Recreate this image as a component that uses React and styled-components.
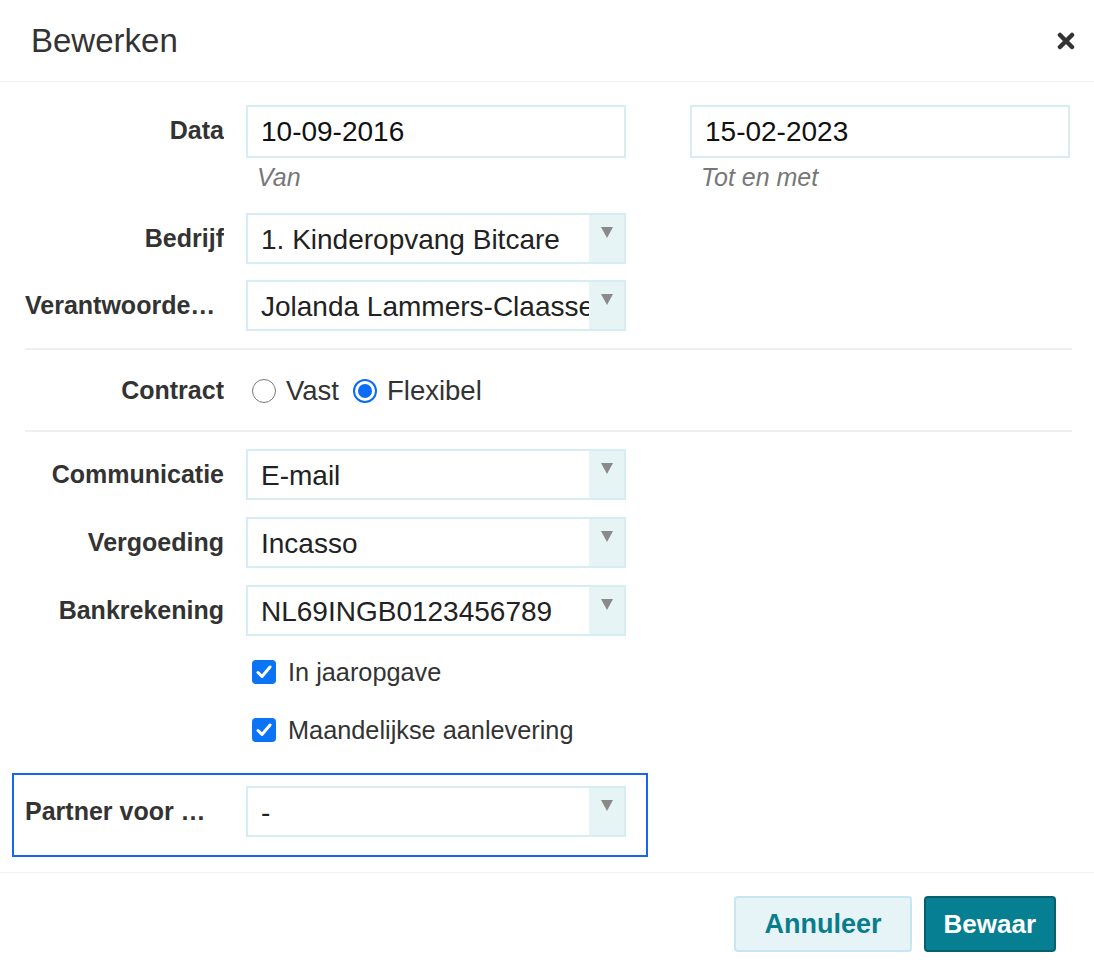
import React, { useState } from 'react'
import styled, { createGlobalStyle } from 'styled-components'

const GlobalStyle = createGlobalStyle`
  body {
    margin: 0;
    background: #fff;
    font-family: "Liberation Sans", Arial, sans-serif;
    color: #333;
  }
`

const Modal = styled.div`
  width: 1094px;
  height: 974px;
  display: flex;
  flex-direction: column;
  background: #fff;
`

const Header = styled.div`
  height: 82px;
  display: flex;
  align-items: center;
  justify-content: space-between;
  padding: 0 18px 0 31px;
  border-bottom: 1px solid #eef4f7;
  box-sizing: border-box;
`

const Title = styled.h1`
  margin: 0;
  font-size: 33px;
  font-weight: normal;
  color: #333;
`

const CloseButton = styled.button`
  border: 0;
  background: none;
  padding: 0;
  width: 20px;
  height: 20px;
  display: flex;
  align-items: center;
  justify-content: center;
  cursor: pointer;
`

const Body = styled.div`
  padding: 23px 22px 0 25px;
  display: flex;
  flex-direction: column;
`

const Row = styled.div`
  display: flex;
  align-items: ${p => (p.$top ? 'flex-start' : 'center')};
  margin-bottom: ${p => p.$mb ?? 16}px;
`

const Label = styled.label`
  width: 199px;
  flex: none;
  margin-right: 22px;
  text-align: ${p => (p.$left ? 'left' : 'right')};
  font-size: 25px;
  font-weight: bold;
  color: #333;
  white-space: nowrap;
  overflow: hidden;
  text-overflow: ellipsis;
  ${p => p.$top && 'padding-top: 11px;'}
`

const FieldGroup = styled.div`
  width: 380px;
  display: flex;
  flex-direction: column;
  & + & {
    margin-left: 64px;
  }
`

const TextInput = styled.input`
  width: 380px;
  height: 53px;
  box-sizing: border-box;
  border: 2px solid #d7ecf3;
  padding: 0 13px;
  font-family: inherit;
  font-size: 28px;
  color: #111;
  outline: none;
`

const Hint = styled.span`
  font-size: 25px;
  font-style: italic;
  color: #777;
  margin: 5px 0 0 11px;
  line-height: 28px;
`

const SelectBox = styled.div`
  width: 380px;
  height: 51px;
  box-sizing: border-box;
  border: 2px solid #d7ecf3;
  display: flex;
  background: #fff;
`

const SelectValue = styled.div`
  flex: 1;
  min-width: 0;
  padding: 3px 0 0 13px;
  display: flex;
  align-items: center;
  font-size: 28px;
  color: #222;
  white-space: nowrap;
  overflow: hidden;
`

const Arrow = styled.div`
  width: 35px;
  flex: none;
  background: #e7f4f6;
  display: flex;
  justify-content: center;
  padding-top: 12px;
  box-sizing: border-box;
`

const Divider = styled.hr`
  border: 0;
  border-top: 2px solid #f0f0f0;
  margin: 0;
`

const ContractRow = styled.div`
  height: 80px;
  display: flex;
  align-items: center;
`

const Choices = styled.div`
  display: flex;
  align-items: center;
  gap: 10px;
  font-size: 27.5px;
  color: #333;
  padding-top: 2px;
`

const RadioLabel = styled.label`
  display: flex;
  align-items: center;
  gap: 10px;
  margin-left: 6px;
  & + & {
    margin-left: 4px;
  }
`

const RadioCircle = styled.span`
  width: 24px;
  height: 24px;
  box-sizing: border-box;
  border-radius: 50%;
  border: ${p => (p.$on ? '2px solid #0a6cf5' : '1.5px solid #777')};
  display: flex;
  align-items: center;
  justify-content: center;
  &::after {
    content: '';
    width: 14px;
    height: 14px;
    border-radius: 50%;
    background: ${p => (p.$on ? '#0a6cf5' : 'transparent')};
  }
`

const CheckRow = styled.label`
  display: flex;
  align-items: center;
  gap: 12px;
  margin-left: 227px;
  height: 30px;
  font-size: 25.3px;
  color: #333;
  margin-bottom: ${p => p.$mb}px;
`

const CheckBox = styled.span`
  width: 24px;
  height: 24px;
  border-radius: 4px;
  background: #0b74f5;
  display: flex;
  align-items: center;
  justify-content: center;
`

const FocusBox = styled.div`
  margin: 0 424px 0 -13px;
  border: 2px solid #1766f2;
  padding: 11px 0 18px 11px;
`

const Footer = styled.div`
  margin-top: 15px;
  border-top: 1px solid #eef4f7;
  display: flex;
  justify-content: flex-end;
  gap: 12px;
  padding: 23px 38px 0 0;
`

const Button = styled.button`
  height: 56px;
  box-sizing: border-box;
  border-radius: 4px;
  font-family: inherit;
  font-size: ${p => (p.$primary ? 26 : 27)}px;
  font-weight: bold;
  cursor: pointer;
  padding: 0 ${p => p.$px}px;
  border: 2px solid ${p => (p.$primary ? '#055f6d' : '#c6e7ef')};
  background: ${p => (p.$primary ? '#077f92' : '#e7f4f7')};
  color: ${p => (p.$primary ? '#fff' : '#0a7d8d')};
`

const Triangle = () => (
  <svg width="12" height="11" viewBox="0 0 12 11">
    <polygon points="0,0 12,0 6,11" fill="#8a8a8a" />
  </svg>
)

const Select = ({ value }) => (
  <SelectBox>
    <SelectValue>{value}</SelectValue>
    <Arrow>
      <Triangle />
    </Arrow>
  </SelectBox>
)

const Check = () => (
  <svg width="16" height="14" viewBox="0 0 16 14">
    <path d="M2 7.5 L6 11.5 L14 2" fill="none" stroke="#fff" strokeWidth="3" strokeLinecap="round" strokeLinejoin="round" />
  </svg>
)

export default function App() {
  const [contract, setContract] = useState('flex')
  return (
    <>
      <GlobalStyle />
      <Modal>
        <Header>
          <Title>Bewerken</Title>
          <CloseButton aria-label="Sluiten">
            <svg width="18" height="18" viewBox="0 0 18 18">
              <path d="M3 3 L15 15 M15 3 L3 15" stroke="#333" strokeWidth="4.5" strokeLinecap="round" />
            </svg>
          </CloseButton>
        </Header>
        <Body>
          <Row $top $mb={22}>
            <Label $top>Data</Label>
            <FieldGroup>
              <TextInput defaultValue="10-09-2016" />
              <Hint>Van</Hint>
            </FieldGroup>
            <FieldGroup>
              <TextInput defaultValue="15-02-2023" />
              <Hint>Tot en met</Hint>
            </FieldGroup>
          </Row>
          <Row>
            <Label>Bedrijf</Label>
            <Select value="1. Kinderopvang Bitcare" />
          </Row>
          <Row $mb={17}>
            <Label $left title="Verantwoordelijke">Verantwoorde…</Label>
            <Select value="Jolanda Lammers-Claassen" />
          </Row>
          <Divider />
          <ContractRow>
            <Label>Contract</Label>
            <Choices>
              <RadioLabel onClick={() => setContract('vast')}>
                <RadioCircle $on={contract === 'vast'} />
                Vast
              </RadioLabel>
              <RadioLabel onClick={() => setContract('flex')}>
                <RadioCircle $on={contract === 'flex'} />
                Flexibel
              </RadioLabel>
            </Choices>
          </ContractRow>
          <Divider />
          <Row $mb={17} style={{ marginTop: 17 }}>
            <Label>Communicatie</Label>
            <Select value="E-mail" />
          </Row>
          <Row $mb={17}>
            <Label>Vergoeding</Label>
            <Select value="Incasso" />
          </Row>
          <Row $mb={21}>
            <Label>Bankrekening</Label>
            <Select value="NL69INGB0123456789" />
          </Row>
          <CheckRow $mb={28}>
            <CheckBox><Check /></CheckBox>
            In jaaropgave
          </CheckRow>
          <CheckRow $mb={28}>
            <CheckBox><Check /></CheckBox>
            Maandelijkse aanlevering
          </CheckRow>
          <FocusBox>
            <Row $mb={0}>
              <Label $left title="Partner voor kinderopvangtoeslag">Partner voor …</Label>
              <Select value="-" />
            </Row>
          </FocusBox>
        </Body>
        <Footer>
          <Button $px={28}>Annuleer</Button>
          <Button $primary $px={18}>Bewaar</Button>
        </Footer>
      </Modal>
    </>
  )
}
